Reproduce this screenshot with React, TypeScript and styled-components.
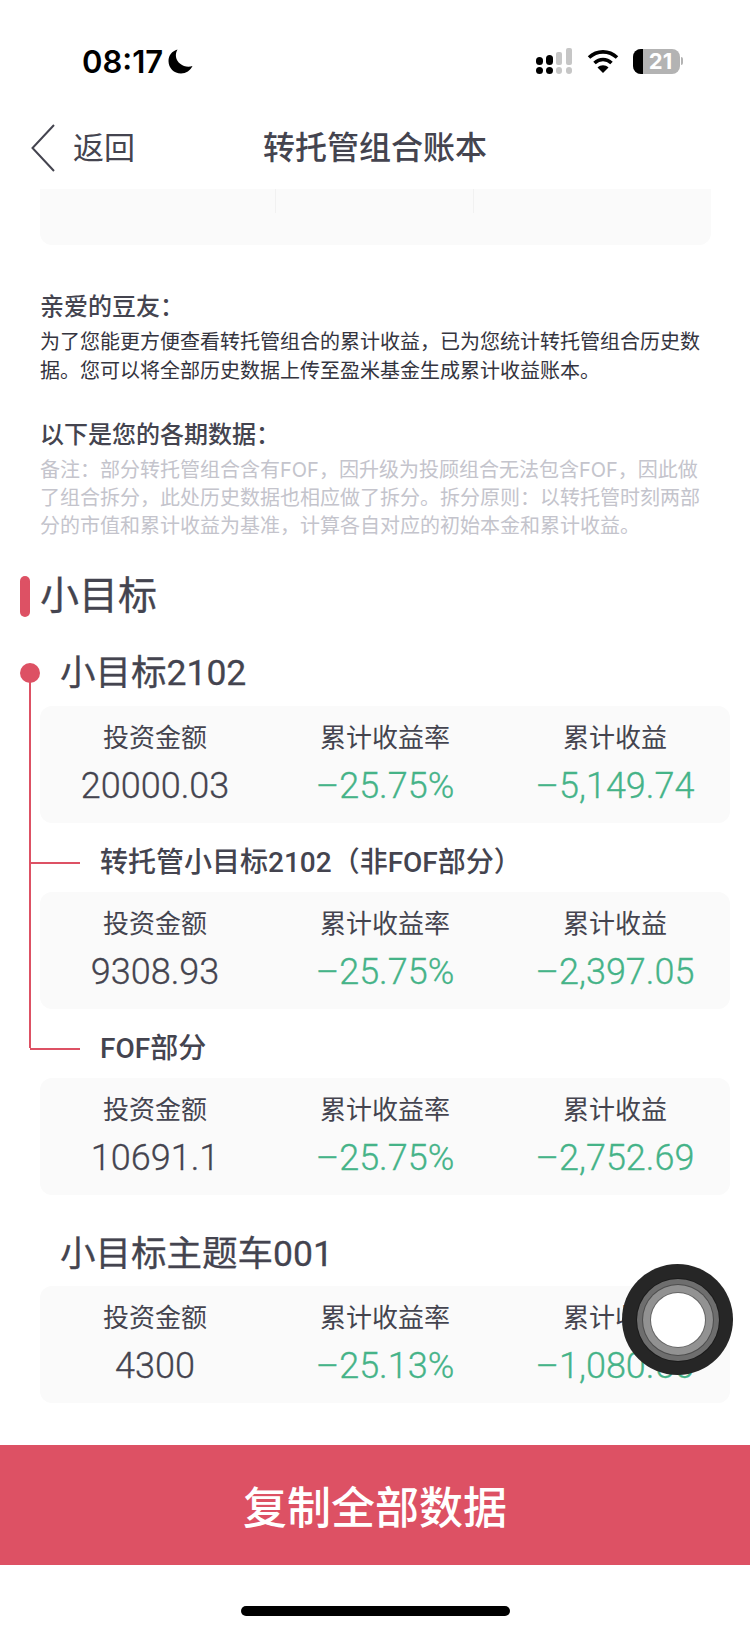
import styled, { createGlobalStyle } from 'styled-components'

const RED = '#dd5164'
const INK = '#44444f'
const GREEN = '#45b388'
const FONT = `Roboto, "Noto Sans CJK SC", sans-serif`

const GREETING = '亲爱的豆友\uFF1A'
const INTRO =
  '为了您能更方便查看转托管组合的累计收益\uFF0C已为您统计转托管组合历史数据。您可以将全部历史数据上传至盈米基金生成累计收益账本。'
const NOTE_HEADING = '以下是您的各期数据\uFF1A'
const NOTE =
  '备注\uFF1A部分转托管组合含有FOF\uFF0C因升级为投顾组合无法包含FOF\uFF0C因此做了组合拆分\uFF0C此处历史数据也相应做了拆分。拆分原则\uFF1A以转托管时刻两部分的市值和累计收益为基准\uFF0C计算各自对应的初始本金和累计收益。'
const NON_FOF_TITLE = '转托管小目标2102\uFF08非FOF部分\uFF09'

const GlobalStyle = createGlobalStyle`
  html, body {
    margin: 0;
    padding: 0;
    background: #fff;
    font-family: ${FONT};
  }
  * {
    box-sizing: border-box;
  }
`

const Page = styled.div`
  position: relative;
  width: 750px;
  height: 1631px;
  overflow: hidden;
  display: flex;
  flex-direction: column;
  background: #fff;
`

const StatusBar = styled.div`
  height: 112px;
  flex: none;
  padding: 40px 67px 0 82px;
  display: flex;
  align-items: flex-start;
  justify-content: space-between;
`

const Clock = styled.div`
  display: flex;
  align-items: center;
  gap: 5px;
  height: 42px;
  font-family: Inter, sans-serif;
  font-weight: 600;
  font-size: 31px;
  color: #000;
`

const StatusIcons = styled.div`
  display: flex;
  align-items: center;
  gap: 11px;
  height: 42px;
`

const BatteryBody = styled.div`
  position: relative;
  width: 47px;
  height: 25px;
  border-radius: 8px;
  overflow: hidden;
  background: #b3b3b3;
  display: flex;
  align-items: center;
  justify-content: center;
  padding-left: 8px;
  color: #fff;
  font-family: Inter, sans-serif;
  font-weight: 700;
  font-size: 22px;

  &::before {
    content: '';
    position: absolute;
    left: 0;
    top: 0;
    bottom: 0;
    width: 10px;
    background: #000;
  }
`

const Battery = styled.div`
  display: flex;
  align-items: center;
  gap: 1px;
  margin-left: 3px;

  &::after {
    content: '';
    width: 2px;
    height: 8px;
    border-radius: 0 2px 2px 0;
    background: #b3b3b3;
  }
`

const NavBar = styled.div`
  position: relative;
  height: 70px;
  flex: none;
  display: flex;
  align-items: center;
  justify-content: center;
`

const BackLink = styled.div`
  position: absolute;
  left: 31px;
  top: 11px;
  display: flex;
  align-items: center;
  gap: 18px;
  font-size: 31px;
  color: ${INK};
`

const BackLabel = styled.span`
  padding-bottom: 4px;
`

const NavTitle = styled.div`
  padding-bottom: 4px;
  font-size: 32px;
  font-weight: 500;
  color: ${INK};
`

const Content = styled.div`
  flex: 1;
  min-height: 0;
  overflow: hidden;
  padding: 7px 20px 0 40px;
  display: flex;
  flex-direction: column;
`

const CutCard = styled.div`
  width: 671px;
  height: 56px;
  flex: none;
  background: #fafafa;
  border-radius: 0 0 12px 12px;
  display: grid;
  grid-template-columns: 236px 198px 1fr;
`

const CutCell = styled.div`
  height: 24px;
  border-right: 1px solid #f1f1f1;

  &:last-child {
    border-right: none;
  }
`

const Intro = styled.div`
  width: 671px;
  margin-top: 42px;
`

const IntroHeading = styled.div`
  font-size: 24px;
  line-height: 41px;
  font-weight: 500;
  color: ${INK};
`

const IntroText = styled.p`
  margin: 0;
  font-size: 20px;
  line-height: 29px;
  color: #34343e;
`

const NoteHeading = styled(IntroHeading)`
  margin-top: 31px;
  line-height: 36px;
`

const Note = styled.p`
  margin: 3px 0 0;
  font-family: Inter, "Noto Sans CJK SC", sans-serif;
  font-size: 20px;
  line-height: 28px;
  color: #c4c4cc;
`

const SectionTitle = styled.h2`
  position: relative;
  margin: 26px 0 0;
  font-size: 39px;
  line-height: 60px;
  font-weight: 400;
  -webkit-text-stroke: 0.3px currentColor;
  color: ${INK};

  &::before {
    content: '';
    position: absolute;
    left: -20px;
    top: 10px;
    width: 10px;
    height: 41px;
    border-radius: 5px;
    background: ${RED};
  }
`

const Tree = styled.div`
  position: relative;
  margin-top: 22px;

  &::before {
    content: '';
    position: absolute;
    left: -11px;
    top: 20px;
    width: 2px;
    height: 380px;
    background: ${RED};
  }
`

const GroupTitle = styled.div<{ $dot?: boolean }>`
  position: relative;
  padding-left: 20px;
  height: 49px;
  font-size: 35.5px;
  line-height: 50px;
  font-weight: 400;
  -webkit-text-stroke: 0.3px currentColor;
  color: ${INK};

  ${(p) =>
    p.$dot &&
    `&::before {
      content: '';
      position: absolute;
      left: -20px;
      top: 15px;
      width: 20px;
      height: 20px;
      border-radius: 50%;
      background: ${RED};
    }`}
`

const SubTitle = styled.div`
  position: relative;
  padding-left: 60px;
  height: 40px;
  margin-top: 20px;
  font-size: 28px;
  line-height: 40px;
  font-weight: 500;
  color: ${INK};

  &::before {
    content: '';
    position: absolute;
    left: -10px;
    top: 19px;
    width: 50px;
    height: 2px;
    background: ${RED};
  }
`

const StatsCard = styled.div`
  width: 690px;
  height: 117px;
  margin-top: 9px;
  background: #fafafa;
  border-radius: 12px;
  display: grid;
  grid-template-columns: repeat(3, 1fr);
  text-align: center;
`

const StatCell = styled.div`
  display: flex;
  flex-direction: column;
  align-items: center;
  padding-top: 13px;
`

const StatLabel = styled.div`
  font-size: 26px;
  line-height: 38px;
  color: ${INK};
`

const StatValue = styled.div<{ $tone?: 'green' }>`
  margin-top: 9px;
  font-size: 36px;
  line-height: 40px;
  font-weight: 300;
  -webkit-text-stroke: 0.3px currentColor;
  color: ${(p) => (p.$tone === 'green' ? GREEN : INK)};
`

const LastTitle = styled(GroupTitle)`
  margin-top: 34px;
  height: 48px;
`

const CopyButton = styled.button`
  height: 120px;
  flex: none;
  border: none;
  background: ${RED};
  color: #fff;
  font-family: ${FONT};
  font-size: 44px;
  font-weight: 500;
`

const HomeArea = styled.div`
  height: 66px;
  flex: none;
  display: flex;
  justify-content: center;
  padding-top: 41px;
`

const HomeIndicator = styled.div`
  width: 269px;
  height: 10px;
  border-radius: 5px;
  background: #000;
`

const AssistiveTouch = styled.div`
  position: absolute;
  left: 622px;
  top: 1264px;
  width: 111px;
  height: 111px;
  border-radius: 50%;
  background: #262626;
  display: flex;
  align-items: center;
  justify-content: center;
`

const TouchRing = styled.div<{ $size: number; $color: string }>`
  width: ${(p) => p.$size}px;
  height: ${(p) => p.$size}px;
  border-radius: 50%;
  background: ${(p) => p.$color};
  box-shadow: 0 0 0 1px rgba(0, 0, 0, 0.3);
  display: flex;
  align-items: center;
  justify-content: center;
`

type Stats = { amount: string; rate: string; profit: string }

const StatsRow = ({ amount, rate, profit }: Stats) => (
  <StatsCard>
    <StatCell>
      <StatLabel>投资金额</StatLabel>
      <StatValue>{amount}</StatValue>
    </StatCell>
    <StatCell>
      <StatLabel>累计收益率</StatLabel>
      <StatValue $tone="green">{rate}</StatValue>
    </StatCell>
    <StatCell>
      <StatLabel>累计收益</StatLabel>
      <StatValue $tone="green">{profit}</StatValue>
    </StatCell>
  </StatsCard>
)

const Cellular = () => (
  <svg width="40" height="26" viewBox="0 0 40 26">
    <rect x="0" y="9" width="7" height="8" rx="3.5" fill="#000" />
    <rect x="10" y="7" width="7" height="10" rx="3.5" fill="#000" />
    <rect x="0" y="19" width="7" height="7" rx="3.5" fill="#000" />
    <rect x="10" y="19" width="7" height="7" rx="3.5" fill="#000" />
    <rect x="20" y="4" width="6" height="13" rx="2" fill="#c6c6c6" />
    <rect x="30" y="0" width="6" height="17" rx="2" fill="#c6c6c6" />
    <rect x="20" y="19" width="6" height="7" rx="3" fill="#c6c6c6" />
    <rect x="30" y="19" width="6" height="7" rx="3" fill="#c6c6c6" />
  </svg>
)

const Wifi = () => (
  <svg width="32" height="24" viewBox="0 0 32 24" fill="none" stroke="#000" strokeWidth="3.6">
    <path d="M2 8.5 C10 1 22 1 30 8.5" />
    <path d="M7.5 14 C12.5 9.4 19.5 9.4 24.5 14" />
    <path d="M10.5 18.4 L16 24 L21.5 18.4 C18.4 15.6 13.6 15.6 10.5 18.4 Z" fill="#000" stroke="none" />
  </svg>
)

const Moon = () => (
  <svg width="25" height="25" viewBox="0 0 25 25">
    <path d="M9.5 0.5 C4 2 0.5 6.5 0.5 12 C0.5 19 6 24.5 13 24.5 C18 24.5 22.5 21.5 24.5 17 C17 19.5 9 14.5 8 8 C7.6 5.2 8.2 2.6 9.5 0.5 Z" fill="#000" />
  </svg>
)

const BackChevron = () => (
  <svg width="24" height="48" viewBox="0 0 24 48" fill="none" stroke={INK} strokeWidth="2">
    <path d="M23 1 L1.5 24 L23 47" />
  </svg>
)

export default function App() {
  return (
    <Page>
      <GlobalStyle />
      <StatusBar>
        <Clock>
          08:17
          <Moon />
        </Clock>
        <StatusIcons>
          <Cellular />
          <Wifi />
          <Battery>
            <BatteryBody>21</BatteryBody>
          </Battery>
        </StatusIcons>
      </StatusBar>
      <NavBar>
        <BackLink>
          <BackChevron />
          <BackLabel>返回</BackLabel>
        </BackLink>
        <NavTitle>转托管组合账本</NavTitle>
      </NavBar>
      <Content>
        <CutCard>
          <CutCell />
          <CutCell />
          <CutCell />
        </CutCard>
        <Intro>
          <IntroHeading>{GREETING}</IntroHeading>
          <IntroText>{INTRO}</IntroText>
          <NoteHeading>{NOTE_HEADING}</NoteHeading>
          <Note>{NOTE}</Note>
        </Intro>
        <SectionTitle>小目标</SectionTitle>
        <Tree>
          <GroupTitle $dot>小目标2102</GroupTitle>
          <StatsRow amount="20000.03" rate="–25.75%" profit="–5,149.74" />
          <SubTitle>{NON_FOF_TITLE}</SubTitle>
          <StatsRow amount="9308.93" rate="–25.75%" profit="–2,397.05" />
          <SubTitle>FOF部分</SubTitle>
          <StatsRow amount="10691.1" rate="–25.75%" profit="–2,752.69" />
        </Tree>
        <LastTitle>小目标主题车001</LastTitle>
        <StatsRow amount="4300" rate="–25.13%" profit="–1,080.50" />
      </Content>
      <CopyButton>复制全部数据</CopyButton>
      <HomeArea>
        <HomeIndicator />
      </HomeArea>
      <AssistiveTouch>
        <TouchRing $size={82} $color="#6e6e6e">
          <TouchRing $size={70} $color="#929292">
            <TouchRing $size={54} $color="#fff" />
          </TouchRing>
        </TouchRing>
      </AssistiveTouch>
    </Page>
  )
}
